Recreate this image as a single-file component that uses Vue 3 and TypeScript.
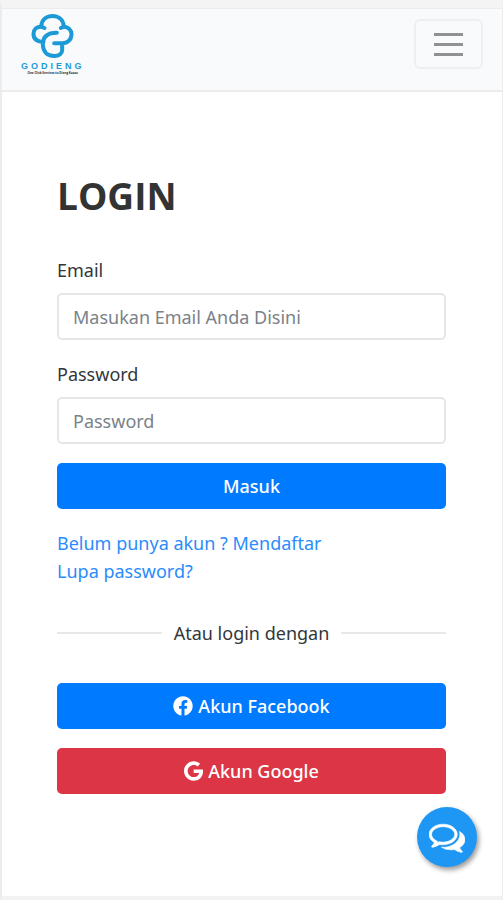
<script setup lang="ts">
import { ref } from 'vue'

const email = ref('')
const password = ref('')
</script>

<template>
  <div class="page">
    <header class="navbar">
      <a class="brand" href="#" aria-label="Godieng">
        <svg class="brand-mark" viewBox="0 0 126 132" aria-hidden="true">
          <path
            d="M36 84C18 83 6 75 6 60C6 46 16 38 29 38C30 19 43 6 63 6C83 6 96 19 97 38C110 39 120 47 120 61C120 76 109 88 92 88H68M92 88V108C92 119 83 126 68 126C47 126 34 112 34 91C34 68 48 56 76 56"
          />
          <path d="M29 38L39 42M97 38L88 42" />
        </svg>
        <span class="brand-name">GODIENG</span>
        <span class="brand-tag">One Click Services to Dieng Kuoso</span>
      </a>
      <button class="toggler" type="button" aria-label="Menu">
        <span class="bar"></span>
        <span class="bar"></span>
        <span class="bar"></span>
      </button>
    </header>

    <main class="content">
      <h1>LOGIN</h1>
      <form @submit.prevent>
        <div class="field">
          <label for="email">Email</label>
          <input id="email" v-model="email" type="email" placeholder="Masukan Email Anda Disini" />
        </div>
        <div class="field">
          <label for="password">Password</label>
          <input id="password" v-model="password" type="password" placeholder="Password" />
        </div>
        <button class="btn primary" type="submit">Masuk</button>
      </form>

      <nav class="links">
        <a href="#">Belum punya akun ? Mendaftar</a>
        <a href="#">Lupa password?</a>
      </nav>

      <div class="divider"><span>Atau login dengan</span></div>

      <div class="social">
        <button class="btn primary" type="button">
          <svg class="icon" viewBox="0 0 512 512" aria-hidden="true">
            <path
              d="M504 256C504 119 393 8 256 8S8 119 8 256c0 123.78 90.69 226.38 209.25 245V327.69h-63V256h63v-54.64c0-62.15 37-96.48 93.67-96.48 27.14 0 55.52 4.84 55.52 4.84v61h-31.28c-30.8 0-40.41 19.12-40.41 38.73V256h68.78l-11 71.69h-57.78V501C413.31 482.38 504 379.78 504 256z"
            />
          </svg>
          Akun Facebook
        </button>
        <button class="btn danger" type="button">
          <svg class="icon" viewBox="0 0 488 512" aria-hidden="true">
            <path
              d="M488 261.8C488 403.3 391.1 504 248 504 110.8 504 0 393.2 0 256S110.8 8 248 8c66.8 0 123 24.5 166.3 64.9l-67.5 64.9C258.5 52.6 94.3 116.6 94.3 256c0 86.5 69.1 156.6 153.7 156.6 98.2 0 135-70.4 140.8-106.9H248v-85.3h236.1c2.3 12.7 3.9 24.9 3.9 41.4z"
            />
          </svg>
          Akun Google
        </button>
      </div>
    </main>

    <button class="chat" type="button" aria-label="Chat">
      <svg viewBox="0 0 1792 1792" aria-hidden="true">
        <path
          d="M704 384q-153 0-286 52t-211.5 141-78.5 191q0 82 53 158t149 132l97 56-35 84q34-20 62-39l44-31 53 10q78 14 153 14 153 0 286-52t211.5-141 78.5-191-78.5-191-211.5-141-286-52zm0-128q191 0 353.5 68.5t256.5 186.5 94 257-94 257-256.5 186.5-353.5 68.5q-86 0-176-16-124 88-278 128-36 9-86 16h-3q-11 0-20.5-8t-11.5-21q-1-3-1-6.5t.5-6.5 2-6l2.5-5 3.5-5.5 4-5 4.5-5 4-4.5q5-6 23-25t26-29.5 22.5-29 25-38.5 20.5-44q-124-72-195-177t-71-224q0-139 94-257t256.5-186.5 353.5-68.5zm822 1169q10 24 20.5 44t25 38.5 22.5 29 26 29.5 23 25q1 1 4 4.5t4.5 5 4 5 3.5 5.5l2.5 5 2 6 .5 6.5-1 6.5q-3 14-13 22t-22 7q-50-7-86-16-154-40-278-128-90 16-176 16-271 0-472-132 58 4 88 4 161 0 309-45t264-129q125-92 192-212t67-254q0-77-23-152 129 71 204 178t75 230q0 120-71 224.5t-195 176.5z"
        />
      </svg>
    </button>
  </div>
</template>

<style>
body {
  background: #fff;
}
</style>

<style scoped>
.page {
  position: relative;
  box-sizing: border-box;
  min-height: 100vh;
  border: solid #ececec;
  border-width: 8px 1px 4px 2px;
  border-top-color: #f4f4f4;
  border-bottom-color: #f2f2f2;
  color: #33373a;
  font-family: 'Noto Sans', 'Open Sans', sans-serif;
  font-size: 18px;
  line-height: 28px;
}

.navbar {
  display: flex;
  align-items: flex-start;
  justify-content: space-between;
  box-sizing: border-box;
  height: 84px;
  padding: 5px 19px 0;
  background: #f8fafc;
  border: solid #ececec;
  border-width: 1px 0 2px;
}

.brand {
  display: flex;
  flex-direction: column;
  align-items: center;
  color: #1c9ad6;
  text-decoration: none;
}

.brand-mark {
  width: 43px;
  height: 44px;
  fill: none;
  stroke: #1c9ad6;
  stroke-width: 12;
  stroke-linecap: round;
  stroke-linejoin: round;
}

.brand-name {
  margin-top: 3px;
  font-family: 'Liberation Sans', Arial, sans-serif;
  font-size: 9px;
  font-weight: 700;
  line-height: 10px;
  letter-spacing: 3px;
}

.brand-tag {
  color: #222b33;
  font-size: 3px;
  font-weight: 700;
  line-height: 4px;
}

.toggler {
  display: flex;
  flex-direction: column;
  align-items: center;
  justify-content: center;
  gap: 7px;
  width: 69px;
  height: 50px;
  margin-top: 5px;
  padding: 0;
  background: transparent;
  border: 2px solid #eeeff1;
  border-radius: 6px;
}

.bar {
  width: 29px;
  height: 3px;
  background: #909292;
}

.content {
  padding: 80px 56px 80px 55px;
}

h1 {
  margin: 0 0 36px;
  color: #333;
  font-family: 'Open Sans', sans-serif;
  font-size: 37px;
  font-weight: 700;
  line-height: 48px;
}

.field {
  display: flex;
  flex-direction: column;
  gap: 9px;
  margin-bottom: 20px;
}

.field:last-of-type {
  margin-bottom: 19px;
}

input {
  box-sizing: border-box;
  width: 100%;
  height: 47px;
  padding: 0 14px;
  color: #495057;
  background: #fff;
  border: 2px solid #e4e6e8;
  border-radius: 5px;
  font: inherit;
}

input::placeholder {
  color: #7b828a;
  opacity: 1;
}

.btn {
  display: flex;
  align-items: center;
  justify-content: center;
  gap: 5px;
  width: 100%;
  height: 46px;
  padding: 0;
  color: #fff;
  border: 0;
  border-radius: 5px;
  font: inherit;
  font-weight: 500;
}

.primary {
  background: #007bff;
}

.danger {
  background: #dc3545;
}

.icon {
  height: 20px;
  fill: currentColor;
}

.links {
  display: flex;
  flex-direction: column;
  align-items: flex-start;
  margin-top: 20px;
}

.links a {
  color: #2b8cfb;
  text-decoration: none;
}

.divider {
  display: flex;
  align-items: center;
  gap: 12px;
  margin: 34px 0 36px;
}

.divider::before,
.divider::after {
  content: '';
  flex: 1;
  height: 2px;
  background: #e8e8e8;
}

.social {
  display: flex;
  flex-direction: column;
  gap: 19px;
}

.chat {
  position: absolute;
  right: 25px;
  bottom: 29px;
  display: flex;
  align-items: center;
  justify-content: center;
  width: 60px;
  height: 60px;
  padding: 0;
  background: #1e96f3;
  border: 0;
  border-radius: 50%;
  box-shadow: 2px 3px 5px rgba(0, 0, 0, 0.4);
}

.chat svg {
  width: 36px;
  height: 36px;
  fill: #fff;
  stroke: #fff;
  stroke-width: 30;
}
</style>
